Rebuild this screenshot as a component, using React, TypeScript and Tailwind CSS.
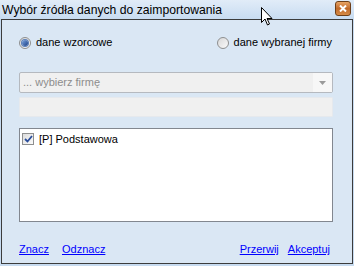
import React from 'react';

const font = { fontFamily: '"Liberation Sans", Arial, sans-serif' };

const Radio: React.FC<{ checked?: boolean; label: string }> = ({ checked, label }) => (
  <label className="flex items-center gap-[5px] text-[11px] text-black leading-[13px]">
    <span className="relative w-[12px] h-[12px] rounded-full border border-[#8e8f8f] bg-gradient-to-br from-[#d8d8d8] to-[#fafafa] flex items-center justify-center">
      {checked && (
        <span className="w-[6px] h-[6px] rounded-full bg-gradient-to-br from-[#7da6e0] to-[#1b3f86] shadow-[0_0_0_1px_#5a7fb8]" />
      )}
    </span>
    <span>{label}</span>
  </label>
);

const App: React.FC = () => {
  return (
    <div
      className="relative w-[354px] h-[266px] bg-[#c7dbf0] flex flex-col overflow-hidden"
      style={font}
    >
      {/* title bar */}
      <div className="h-[19px] flex items-center justify-between bg-gradient-to-b from-[#e1ecf8] to-[#c8dcf1] pl-[2px] pr-[3px]">
        <span className="text-[12.2px] text-black leading-none pt-[1px]">
          Wybór źródła danych do zaimportowania
        </span>
        <span className="w-[16px] h-[15px] rounded-[3px] border border-[#6e3f18] bg-gradient-to-b from-[#e8a464] via-[#c06a2a] to-[#d68a45] flex items-center justify-center mt-[-2px]">
          <svg width="8" height="7" viewBox="0 0 8 7">
            <path d="M1 0.5 L7 6.5 M7 0.5 L1 6.5" stroke="#ffffff" strokeWidth="2" />
          </svg>
        </span>
      </div>

      {/* content */}
      <div className="flex-1 mx-[1px] mb-[2px] border border-[#3c3c3c] bg-[#dae7f4] flex flex-col pl-[17px] pr-[19px] pt-[16px] pb-[7px]">
        <div className="flex items-center justify-between pl-[0px] pr-[1px] h-[13px]">
          <Radio checked label="dane wzorcowe" />
          <Radio label="dane wybranej firmy" />
        </div>

        {/* combobox */}
        <div className="mt-[23px] h-[21px] flex items-center rounded-[2px] border border-[#b5b9bf] bg-[#f0f0f0]">
          <span className="flex-1 pl-[3px] text-[11px] text-[#8d8d8d]">... wybierz firmę</span>
          <span className="w-[19px] h-full flex items-center justify-center bg-[#f7f7f7]">
            <svg width="7" height="4" viewBox="0 0 7 4">
              <path d="M0 0 H7 L3.5 4 Z" fill="#9a9a9a" />
            </svg>
          </span>
        </div>

        {/* textbox */}
        <div className="mt-[4px] h-[20px] rounded-[1px] border border-[#e6e9ed] bg-[#f0f0f0]" />

        {/* listbox */}
        <div className="mt-[11px] h-[94px] border border-[#82878f] bg-white pt-[2px] pl-[2px]">
          <label className="flex items-center gap-[5px] text-[11px] text-black">
            <span className="w-[12px] h-[12px] border border-[#8e8f8f] bg-gradient-to-br from-[#dcdcdc] to-[#fbfbfb] flex items-center justify-center">
              <svg width="9" height="8" viewBox="0 0 9 8">
                <path d="M1 4 L3.5 6.5 L8 1" stroke="#2a4d9a" strokeWidth="1.8" fill="none" />
              </svg>
            </span>
            <span>[P] Podstawowa</span>
          </label>
        </div>

        {/* links */}
        <div className="mt-auto flex items-center justify-between text-[11px] leading-[13px] text-[#0000ff] pr-[3px]">
          <div className="flex gap-[13px]">
            <a className="underline">Znacz</a>
            <a className="underline">Odznacz</a>
          </div>
          <div className="flex gap-[9px]">
            <a className="underline">Przerwij</a>
            <a className="underline">Akceptuj</a>
          </div>
        </div>
      </div>

      {/* mouse cursor */}
      <svg
        className="absolute left-[261px] top-[7px]"
        width="12"
        height="19"
        viewBox="0 0 12 19"
      >
        <path
          d="M0.5 0.5 L0.5 15.5 L4 12 L6.5 18 L8.5 17 L6 11.5 L11 11.5 Z"
          fill="#ffffff"
          stroke="#000000"
          strokeWidth="1"
        />
      </svg>
    </div>
  );
};

export default App;
